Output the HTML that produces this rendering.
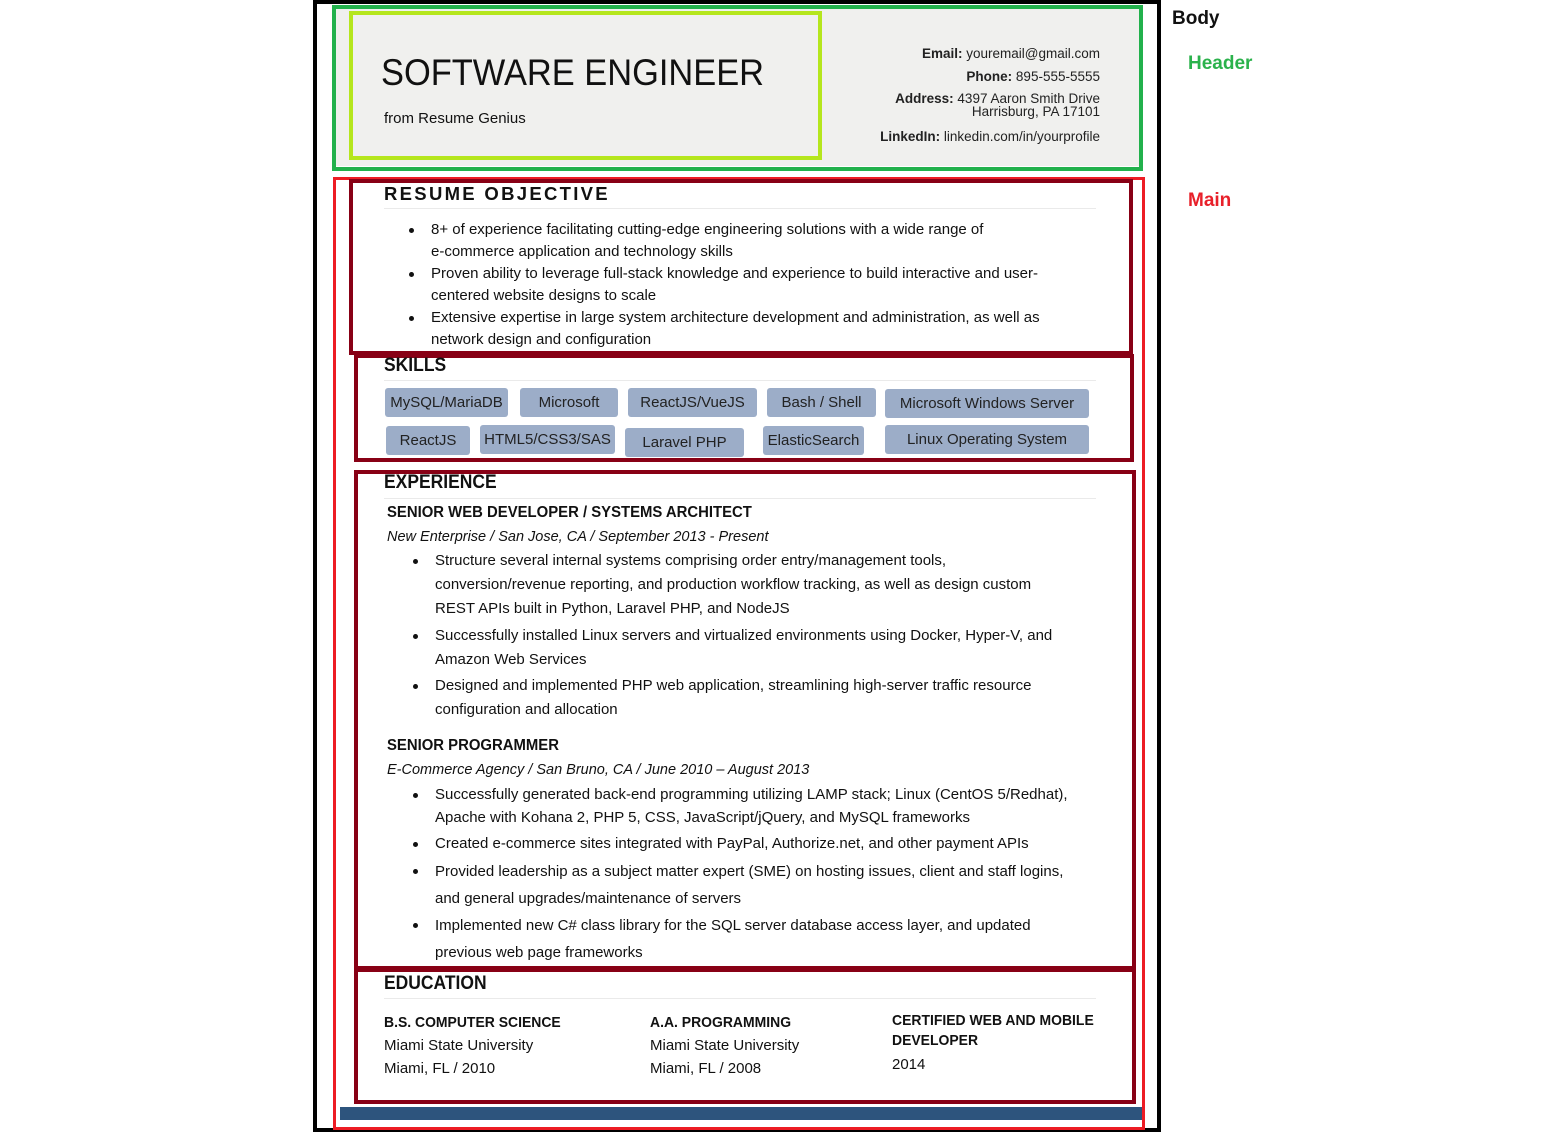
<!DOCTYPE html>
<html><head><meta charset="utf-8"><style>
*{margin:0;padding:0;box-sizing:border-box}
body{width:1542px;height:1132px;background:#fff;position:relative;font-family:"Liberation Sans",sans-serif;color:#111;overflow:hidden}
.a{position:absolute}
.b{position:absolute;border-style:solid}
.t{position:absolute;white-space:nowrap}
.tag{position:absolute;background:#9cadc8;border-radius:3px;font-size:15px;color:#222;text-align:center;line-height:29px}
.p{font-size:15px;color:#111;white-space:nowrap}
.h{font-size:19px;font-weight:bold;transform:scaleX(.92);transform-origin:left}
.line{position:absolute;height:1px;background:#eaeaea}
.dot{position:absolute;width:5px;height:5px;border-radius:50%;background:#111}
</style></head><body>
<div class="b" style="left:313px;top:0;width:848px;height:1132px;border-width:4px;border-color:#000"></div>
<div class="t" style="left:1172px;top:8px;font-size:19px;font-weight:bold">Body</div>
<div class="t" style="left:1188px;top:53px;font-size:19px;font-weight:bold;color:#2bb24c">Header</div>
<div class="t" style="left:1188px;top:190px;font-size:19px;font-weight:bold;color:#e8202a">Main</div>
<div class="a" style="left:336px;top:8px;width:804px;height:158px;background:#f0f0ee"></div>
<div class="b" style="left:332px;top:5px;width:811px;height:166px;border-width:4px;border-color:#22b14c"></div>
<div class="b" style="left:349px;top:11px;width:473px;height:149px;border-width:4px;border-color:#b5e61d"></div>
<div class="t" style="left:381px;top:52px;font-size:37px;transform:scaleX(.93);transform-origin:left">SOFTWARE ENGINEER</div>
<div class="t" style="left:384px;top:110px;font-size:15px">from Resume Genius</div>
<div class="t" style="right:442px;top:42px;font-size:13.5px;text-align:right;line-height:23px;color:#222">
<b>Email:</b> youremail@gmail.com<br><b>Phone:</b> 895-555-5555<br>
<div style="line-height:13px;margin:4px 0 7px"><b>Address:</b> 4397 Aaron Smith Drive<br>Harrisburg, PA 17101</div>
<b>LinkedIn:</b> linkedin.com/in/yourprofile</div>
<div class="b" style="left:333px;top:177px;width:812px;height:953px;border-width:3px;border-color:#ed1c24"></div>
<div class="b" style="left:349px;top:179px;width:784px;height:176px;border-width:4px;border-color:#880015"></div>
<div class="b" style="left:354px;top:354px;width:780px;height:108px;border-width:4px;border-color:#880015"></div>
<div class="b" style="left:354px;top:470px;width:782px;height:500px;border-width:4px;border-color:#880015"></div>
<div class="b" style="left:354px;top:968px;width:782px;height:136px;border-width:4px;border-color:#880015"></div>
<div class="a" style="left:340px;top:1107px;width:802px;height:13px;background:#2d547d"></div>

<div class="t" style="left:384px;top:183px;font-size:18.5px;font-weight:bold;letter-spacing:2.3px">RESUME OBJECTIVE</div>
<div class="line" style="left:384px;top:208px;width:712px"></div>
<div class="a p" style="left:431px;top:219px;line-height:22px">
<div style="position:relative"><span class="dot" style="left:-22px;top:9px"></span>8+ of experience facilitating cutting-edge engineering solutions with a wide range of<br>e-commerce application and technology skills</div>
<div style="position:relative"><span class="dot" style="left:-22px;top:9px"></span>Proven ability to leverage full-stack knowledge and experience to build interactive and user-<br>centered website designs to scale</div>
<div style="position:relative"><span class="dot" style="left:-22px;top:9px"></span>Extensive expertise in large system architecture development and administration, as well as<br>network design and configuration</div>
</div>

<div class="t h" style="left:384px;top:355px">SKILLS</div>
<div class="line" style="left:384px;top:380px;width:712px"></div>
<div class="tag" style="left:385px;top:388px;width:123px">MySQL/MariaDB</div>
<div class="tag" style="left:520px;top:388px;width:98px">Microsoft</div>
<div class="tag" style="left:628px;top:388px;width:129px">ReactJS/VueJS</div>
<div class="tag" style="left:767px;top:388px;width:109px">Bash / Shell</div>
<div class="tag" style="left:885px;top:389px;width:204px">Microsoft Windows Server</div>
<div class="tag" style="left:386px;top:426px;width:84px">ReactJS</div>
<div class="tag" style="left:480px;top:425px;width:135px">HTML5/CSS3/SAS</div>
<div class="tag" style="left:625px;top:428px;width:119px">Laravel PHP</div>
<div class="tag" style="left:763px;top:426px;width:101px">ElasticSearch</div>
<div class="tag" style="left:885px;top:425px;width:204px">Linux Operating System</div>

<div class="t h" style="left:384px;top:472px">EXPERIENCE</div>
<div class="line" style="left:384px;top:498px;width:712px"></div>
<div class="t" style="left:387px;top:504px;font-size:16px;font-weight:bold;transform:scaleX(.93);transform-origin:left">SENIOR WEB DEVELOPER / SYSTEMS ARCHITECT</div>
<div class="t p" style="left:387px;top:529px;font-style:italic;font-size:14.5px">New Enterprise / San Jose, CA / September 2013 - Present</div>
<div class="a p" style="left:435px;top:549px;line-height:24px">
<div style="position:relative"><span class="dot" style="left:-22px;top:10px"></span>Structure several internal systems comprising order entry/management tools,<br>conversion/revenue reporting, and production workflow tracking, as well as design custom<br>REST APIs built in Python, Laravel PHP, and NodeJS</div>
<div style="position:relative;margin-top:3px"><span class="dot" style="left:-22px;top:10px"></span>Successfully installed Linux servers and virtualized environments using Docker, Hyper-V, and<br>Amazon Web Services</div>
<div style="position:relative;margin-top:2px"><span class="dot" style="left:-22px;top:10px"></span>Designed and implemented PHP web application, streamlining high-server traffic resource<br>configuration and allocation</div>
</div>
<div class="t" style="left:387px;top:737px;font-size:16px;font-weight:bold;transform:scaleX(.93);transform-origin:left">SENIOR PROGRAMMER</div>
<div class="t p" style="left:387px;top:762px;font-style:italic;font-size:14.5px">E-Commerce Agency / San Bruno, CA / June 2010 – August 2013</div>
<div class="a p" style="left:435px;top:783px;line-height:23px">
<div style="position:relative"><span class="dot" style="left:-22px;top:10px"></span>Successfully generated back-end programming utilizing LAMP stack; Linux (CentOS 5/Redhat),<br>Apache with Kohana 2, PHP 5, CSS, JavaScript/jQuery, and MySQL frameworks</div>
<div style="position:relative;margin-top:3px"><span class="dot" style="left:-22px;top:10px"></span>Created e-commerce sites integrated with PayPal, Authorize.net, and other payment APIs</div>
<div style="position:relative;margin-top:3px;line-height:27px"><span class="dot" style="left:-22px;top:11px"></span>Provided leadership as a subject matter expert (SME) on hosting issues, client and staff logins,<br>and general upgrades/maintenance of servers</div>
<div style="position:relative;line-height:27px"><span class="dot" style="left:-22px;top:11px"></span>Implemented new C# class library for the SQL server database access layer, and updated<br>previous web page frameworks</div>
</div>

<div class="t h" style="left:384px;top:973px">EDUCATION</div>
<div class="line" style="left:384px;top:998px;width:712px"></div>
<div class="a p" style="left:384px;top:1011px;line-height:23px"><b style="display:inline-block;transform:scaleX(.93);transform-origin:left">B.S. COMPUTER SCIENCE</b><br>Miami State University<br>Miami, FL / 2010</div>
<div class="a p" style="left:650px;top:1011px;line-height:23px"><b style="display:inline-block;transform:scaleX(.93);transform-origin:left">A.A. PROGRAMMING</b><br>Miami State University<br>Miami, FL / 2008</div>
<div class="a p" style="left:892px;top:1011px;line-height:20px"><b style="display:inline-block;transform:scaleX(.93);transform-origin:left">CERTIFIED WEB AND MOBILE<br>DEVELOPER</b><div style="margin-top:4px">2014</div></div>
</body></html>
